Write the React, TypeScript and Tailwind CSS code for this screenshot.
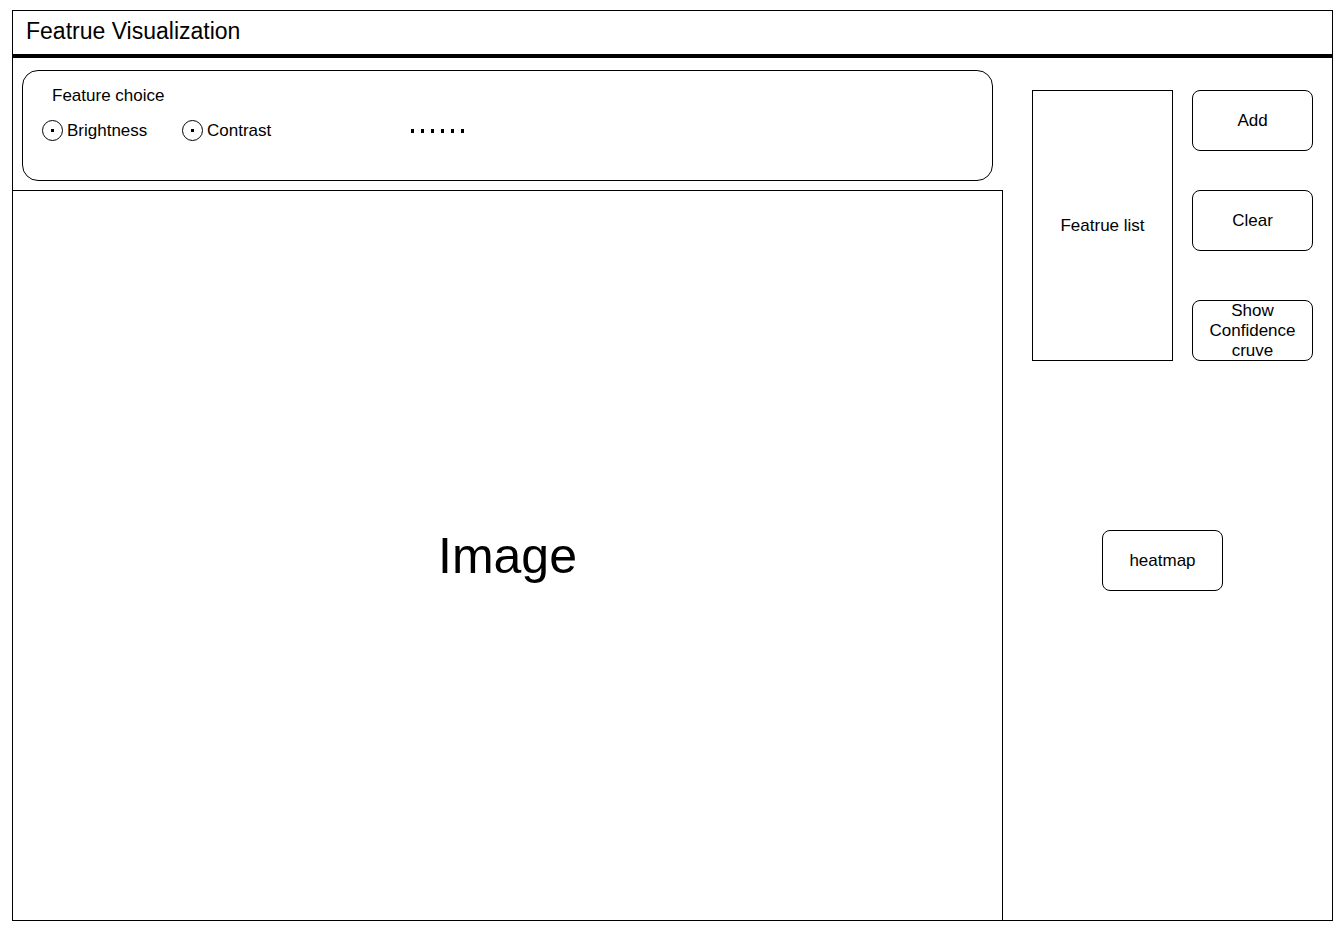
export default function App() {
  const font = { fontFamily: '"Liberation Sans", Arial, sans-serif' };
  return (
    <div className="w-[1344px] h-[931px] bg-white text-black" style={font}>
      <div className="ml-[12px] pt-[10px]">
        <div className="w-[1321px] h-[911px] border border-black flex flex-col">
          {/* Header */}
          <div className="h-[47px] shrink-0 border-b-4 border-black flex items-center pl-[13px] pb-[2px]">
            <span className="text-[23px] leading-none">Featrue Visualization</span>
          </div>

          <div className="flex flex-1">
            {/* Left column */}
            <div className="w-[990px] flex flex-col">
              <div className="h-[132px] shrink-0 pt-[12px] pl-[9px]">
                <div className="w-[971px] h-[111px] border border-black rounded-[16px] pl-[19px] pt-[15px]">
                  <div className="ml-[10px] text-[17px] leading-[20px]">Feature choice</div>
                  <div className="mt-[14px] h-[21px] flex items-center text-[17px]">
                    <Radio label="Brightness" width="w-[140px]" />
                    <Radio label="Contrast" width="w-[229px]" />
                    <div className="flex gap-[7px] pt-[1px]">
                      {[0, 1, 2, 3, 4, 5].map((i) => (
                        <span key={i} className="block w-[3px] h-[4px] bg-black" />
                      ))}
                    </div>
                  </div>
                </div>
              </div>
              <div className="flex-1 border-t border-r border-black flex items-center justify-center">
                <span className="text-[50px] leading-none">Image</span>
              </div>
            </div>

            {/* Right column */}
            <div className="flex-1 pt-[32px] pl-[29px]">
              <div className="flex gap-[19px]">
                <div className="w-[141px] h-[271px] border border-black flex items-center justify-center text-[17px]">
                  Featrue list
                </div>
                <div className="flex flex-col">
                  <Btn label="Add" />
                  <div className="mt-[39px]">
                    <Btn label="Clear" />
                  </div>
                  <div className="mt-[49px]">
                    <Btn label={"Show Confidence cruve"} narrow />
                  </div>
                </div>
              </div>
              <div className="mt-[169px] ml-[70px]">
                <Btn label="heatmap" />
              </div>
            </div>
          </div>
        </div>
      </div>
    </div>
  );
}

function Radio({ label, width }: { label: string; width: string }) {
  return (
    <div className={`${width} flex items-center gap-[4px]`}>
      <span className="w-[21px] h-[21px] rounded-full border border-black flex items-center justify-center">
        <span className="block w-[3px] h-[3px] bg-black" />
      </span>
      <span className="leading-[20px]">{label}</span>
    </div>
  );
}

function Btn({ label, narrow }: { label: string; narrow?: boolean }) {
  return (
    <div
      className={`w-[121px] h-[61px] border border-black rounded-[8px] flex items-center justify-center text-center text-[17px] leading-[20px] ${
        narrow ? "px-[12px]" : ""
      }`}
    >
      {label}
    </div>
  );
}
